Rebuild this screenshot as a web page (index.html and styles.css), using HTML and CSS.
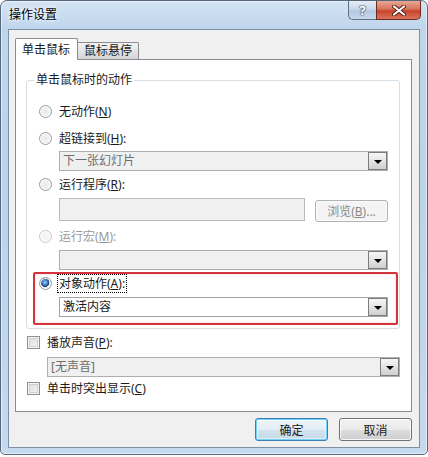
FILE: index.html
```html
<!DOCTYPE html>
<html lang="zh-CN">
<head>
  <meta charset="UTF-8" />
  <title>操作设置</title>
  <link rel="stylesheet" href="styles.css">
</head>
<body>
  <div class="window">
    <div class="titlebar">
      <span class="title">操作设置</span>
      <div class="caption-btns">
        <span class="cap-btn help">?</span>
        <span class="cap-btn close">
          <svg viewBox="0 0 14 11" width="14" height="11" aria-hidden="true">
            <path d="M2 1.5 L12 9.5 M12 1.5 L2 9.5" stroke="#5b1d12" stroke-width="4" stroke-linecap="round" fill="none"/>
            <path d="M2 1.5 L12 9.5 M12 1.5 L2 9.5" stroke="#ffffff" stroke-width="2.2" stroke-linecap="round" fill="none"/>
          </svg>
        </span>
      </div>
    </div>

    <div class="client">
      <div class="tabs">
        <span class="tab active">单击鼠标</span>
        <span class="tab">鼠标悬停</span>
      </div>

      <div class="tabpanel">
        <fieldset class="group">
          <legend>单击鼠标时的动作</legend>

          <label class="opt"><span class="radio"></span><span>无动作(<u>N</u>)</span></label>
          <label class="opt gap7"><span class="radio"></span><span>超链接到(<u>H</u>):</span></label>
          <div class="combo disabled indent gap3"><span class="combo-text">下一张幻灯片</span><span class="drop"></span></div>

          <label class="opt gap3"><span class="radio"></span><span>运行程序(<u>R</u>):</span></label>
          <div class="prog-row indent">
            <span class="textbox"></span>
            <span class="btn browse">浏览(<u>B</u>)...</span>
          </div>

          <label class="opt off gap4"><span class="radio"></span><span>运行宏(<u>M</u>):</span></label>
          <div class="combo disabled indent gap4"><span class="combo-text"></span><span class="drop"></span></div>

          <div class="mark">
            <label class="opt sel"><span class="radio checked"></span><span class="focus">对象动作(<u>A</u>):</span></label>
            <div class="combo indent gap4"><span class="combo-text">激活内容</span><span class="drop"></span></div>
          </div>
        </fieldset>

        <label class="opt check-row"><span class="check"></span><span>播放声音(<u>P</u>):</span></label>
        <div class="combo disabled sound"><span class="combo-text">[无声音]</span><span class="drop"></span></div>
        <label class="opt check-row2"><span class="check"></span><span>单击时突出显示(<u>C</u>)</span></label>
      </div>

      <div class="buttons">
        <span class="btn default">确定</span>
        <span class="btn">取消</span>
      </div>
    </div>
  </div>
</body>
</html>
```

FILE: styles.css
```css
body {
  margin: 0;
  background: #ffffff;
  font-family: "Noto Sans", "Noto Sans CJK SC", sans-serif;
  font-size: 12px;
  color: #1a1a1a;
}
u {
  text-decoration: underline;
}

.window {
  box-sizing: border-box;
  width: 428px;
  height: 455px;
  border: 1px solid #56677c;
  border-radius: 7px 7px 5px 5px;
  padding: 0 7px 6px 7px;
  display: flex;
  flex-direction: column;
  background: linear-gradient(to bottom, #d3e3f3 0, #bfd5ec 28px, #bcd3ec 200px, #c5d9ef 100%);
  box-shadow: inset 0 0 0 1px rgba(255, 255, 255, 0.55);
}

/* title bar */
.titlebar {
  height: 28px;
  display: flex;
  justify-content: space-between;
  align-items: flex-start;
}
.title {
  padding-top: 5px;
  padding-left: 1px;
  line-height: 18px;
  color: #000;
  text-shadow: 0 0 6px #ffffff, 0 0 3px #ffffff;
}
.caption-btns {
  display: flex;
  margin-right: -1px;
}
.cap-btn {
  box-sizing: border-box;
  height: 19px;
  display: flex;
  align-items: center;
  justify-content: center;
  border: 1px solid #5f6f84;
  border-top: none;
}
.help {
  width: 28px;
  border-right: none;
  border-radius: 0 0 0 5px;
  background: linear-gradient(to bottom, #e4edf7 0, #cad9ec 45%, #b3c7e0 55%, #c8d8ec 100%);
  color: #ffffff;
  font-weight: bold;
  font-size: 13px;
  text-shadow: 0 0 1px #33475f, 0 0 1px #33475f, 0 0 2px #33475f;
}
.close {
  width: 45px;
  border-color: #6b2a1e;
  border-radius: 0 0 5px 0;
  background: linear-gradient(to bottom, #e9a896 0, #d6735c 45%, #c7432a 55%, #d9755d 100%);
}

/* client area */
.client {
  flex: 1;
  box-sizing: border-box;
  background: #f0f0f0;
  border: 1px solid #7d8fa6;
  padding: 8px 7px 0 6px;
  display: flex;
  flex-direction: column;
}

.tabs {
  display: flex;
  height: 22px;
  margin-bottom: -1px;
  position: relative;
  z-index: 1;
}
.tab {
  box-sizing: border-box;
  height: 17px;
  align-self: flex-end;
  margin-bottom: 1px;
  padding: 0 6px;
  line-height: 16px;
  border: 1px solid #898c95;
  border-bottom: none;
  border-left: none;
  border-radius: 0 2px 0 0;
  background: linear-gradient(to bottom, #f3f3f3, #e4e4e4 50%, #d6d6d6);
}
.tab.active {
  height: 22px;
  margin-bottom: 0;
  padding: 0 7px 0 6px;
  line-height: 21px;
  border-left: 1px solid #898c95;
  border-radius: 2px 2px 0 0;
  background: #ffffff;
}

.tabpanel {
  box-sizing: border-box;
  height: 353px;
  background: #ffffff;
  border: 1px solid #898c95;
  padding: 12px 11px 0 10px;
}

/* group box */
.group {
  margin: 0;
  border: 1px solid #d5dfe5;
  border-radius: 3px;
  padding: 13px 11px 3px 12px;
}
.group legend {
  margin-left: -5px;
  padding: 0 2px;
  line-height: 16px;
}

.opt {
  display: flex;
  align-items: center;
  height: 20px;
  gap: 7px;
}
.gap3 { margin-top: 3px; }
.gap4 { margin-top: 4px; }
.gap7 { margin-top: 7px; }
.indent { margin-left: 20px; }
.opt.off {
  color: #9a9a9a;
}

.radio {
  box-sizing: border-box;
  width: 13px;
  height: 13px;
  border-radius: 50%;
  border: 1px solid #9a9c9e;
  background: radial-gradient(circle at 50% 50%, #e8e8e8 0, #f2f2f2 45%, #d9d9d9 100%);
  box-shadow: inset 0 0 0 1px #ffffff;
}
.off .radio {
  border-color: #c6c7c8;
  background: #f4f4f4;
}
.radio.checked {
  background: radial-gradient(circle at 45% 40%, #a6d2f4 0, #3a7cc0 30%, #1b3f78 48%, #e6e6e6 52%, #d8d8d8 100%);
}

.check {
  box-sizing: border-box;
  width: 13px;
  height: 13px;
  border: 1px solid #8f8f8f;
  background: linear-gradient(135deg, #dcdcdc, #f6f6f6);
  box-shadow: inset 0 0 0 1px #f4f4f4, inset 0 0 0 2px #d0d0d0;
}

/* combo boxes */
.combo {
  box-sizing: border-box;
  height: 20px;
  display: flex;
  align-items: center;
  border: 1px solid #a3a3a3;
  background: #ffffff;
}
.combo.disabled {
  background: #f0f0f0;
  border-color: #aeaeae;
  color: #6d6d6d;
}
.combo-text {
  flex: 1;
  padding-left: 3px;
  line-height: 18px;
}
.drop {
  box-sizing: border-box;
  width: 19px;
  height: 18px;
  border: 1px solid #7c7c7c;
  background: linear-gradient(to bottom, #f6f6f6, #e4e4e4 50%, #cfcfcf);
  display: flex;
  align-items: center;
  justify-content: center;
}
.drop::after {
  content: "";
  border-left: 4px solid transparent;
  border-right: 4px solid transparent;
  border-top: 4px solid #000;
  margin-top: 1px;
}

.prog-row {
  display: flex;
  align-items: center;
  justify-content: space-between;
  height: 24px;
  margin-top: 4px;
}
.textbox {
  box-sizing: border-box;
  width: 246px;
  height: 23px;
  align-self: flex-start;
  background: #f0f0f0;
  border: 1px solid #b9b9b9;
}

/* buttons */
.btn {
  box-sizing: border-box;
  width: 73px;
  height: 23px;
  display: flex;
  align-items: center;
  justify-content: center;
  border: 1px solid #707070;
  border-radius: 3px;
  background: linear-gradient(to bottom, #f2f2f2 0, #ebebeb 50%, #dddddd 51%, #cfcfcf 100%);
  box-shadow: inset 0 0 0 1px rgba(255, 255, 255, 0.8);
}
.btn.browse {
  height: 22px;
  align-self: flex-end;
  color: #8a8a8a;
  border-color: #adb2b5;
  background: #f4f4f4;
}
.btn.default {
  border-color: #3c7fb1;
  box-shadow: inset 0 0 0 1px #6fd3f8, inset 0 0 0 2px rgba(255, 255, 255, 0.5);
  background: linear-gradient(to bottom, #eef5fa 0, #e4eef6 50%, #d4e2ee 51%, #c6d9e8 100%);
}

/* red annotation frame */
.mark {
  margin: 2px -10px 0 -6px;
  padding: 0 8px 6px 4px;
  border: 2px solid #d3343c;
  border-radius: 2px;
  box-shadow: inset 0 0 2px rgba(211, 52, 60, 0.35);
}
.opt.sel {
  height: 19px;
}
.focus {
  margin-left: -2px;
  padding: 0 1px;
  border: 1px dotted #000;
  line-height: 17px;
}

.check-row {
  margin-top: 3px;
  margin-left: 1px;
}
.combo.sound {
  margin: 5px 0 0 21px;
}
.check-row2 {
  margin-top: 1px;
  margin-left: 1px;
}

.buttons {
  display: flex;
  justify-content: flex-end;
  gap: 11px;
  margin-top: 6px;
}
```
